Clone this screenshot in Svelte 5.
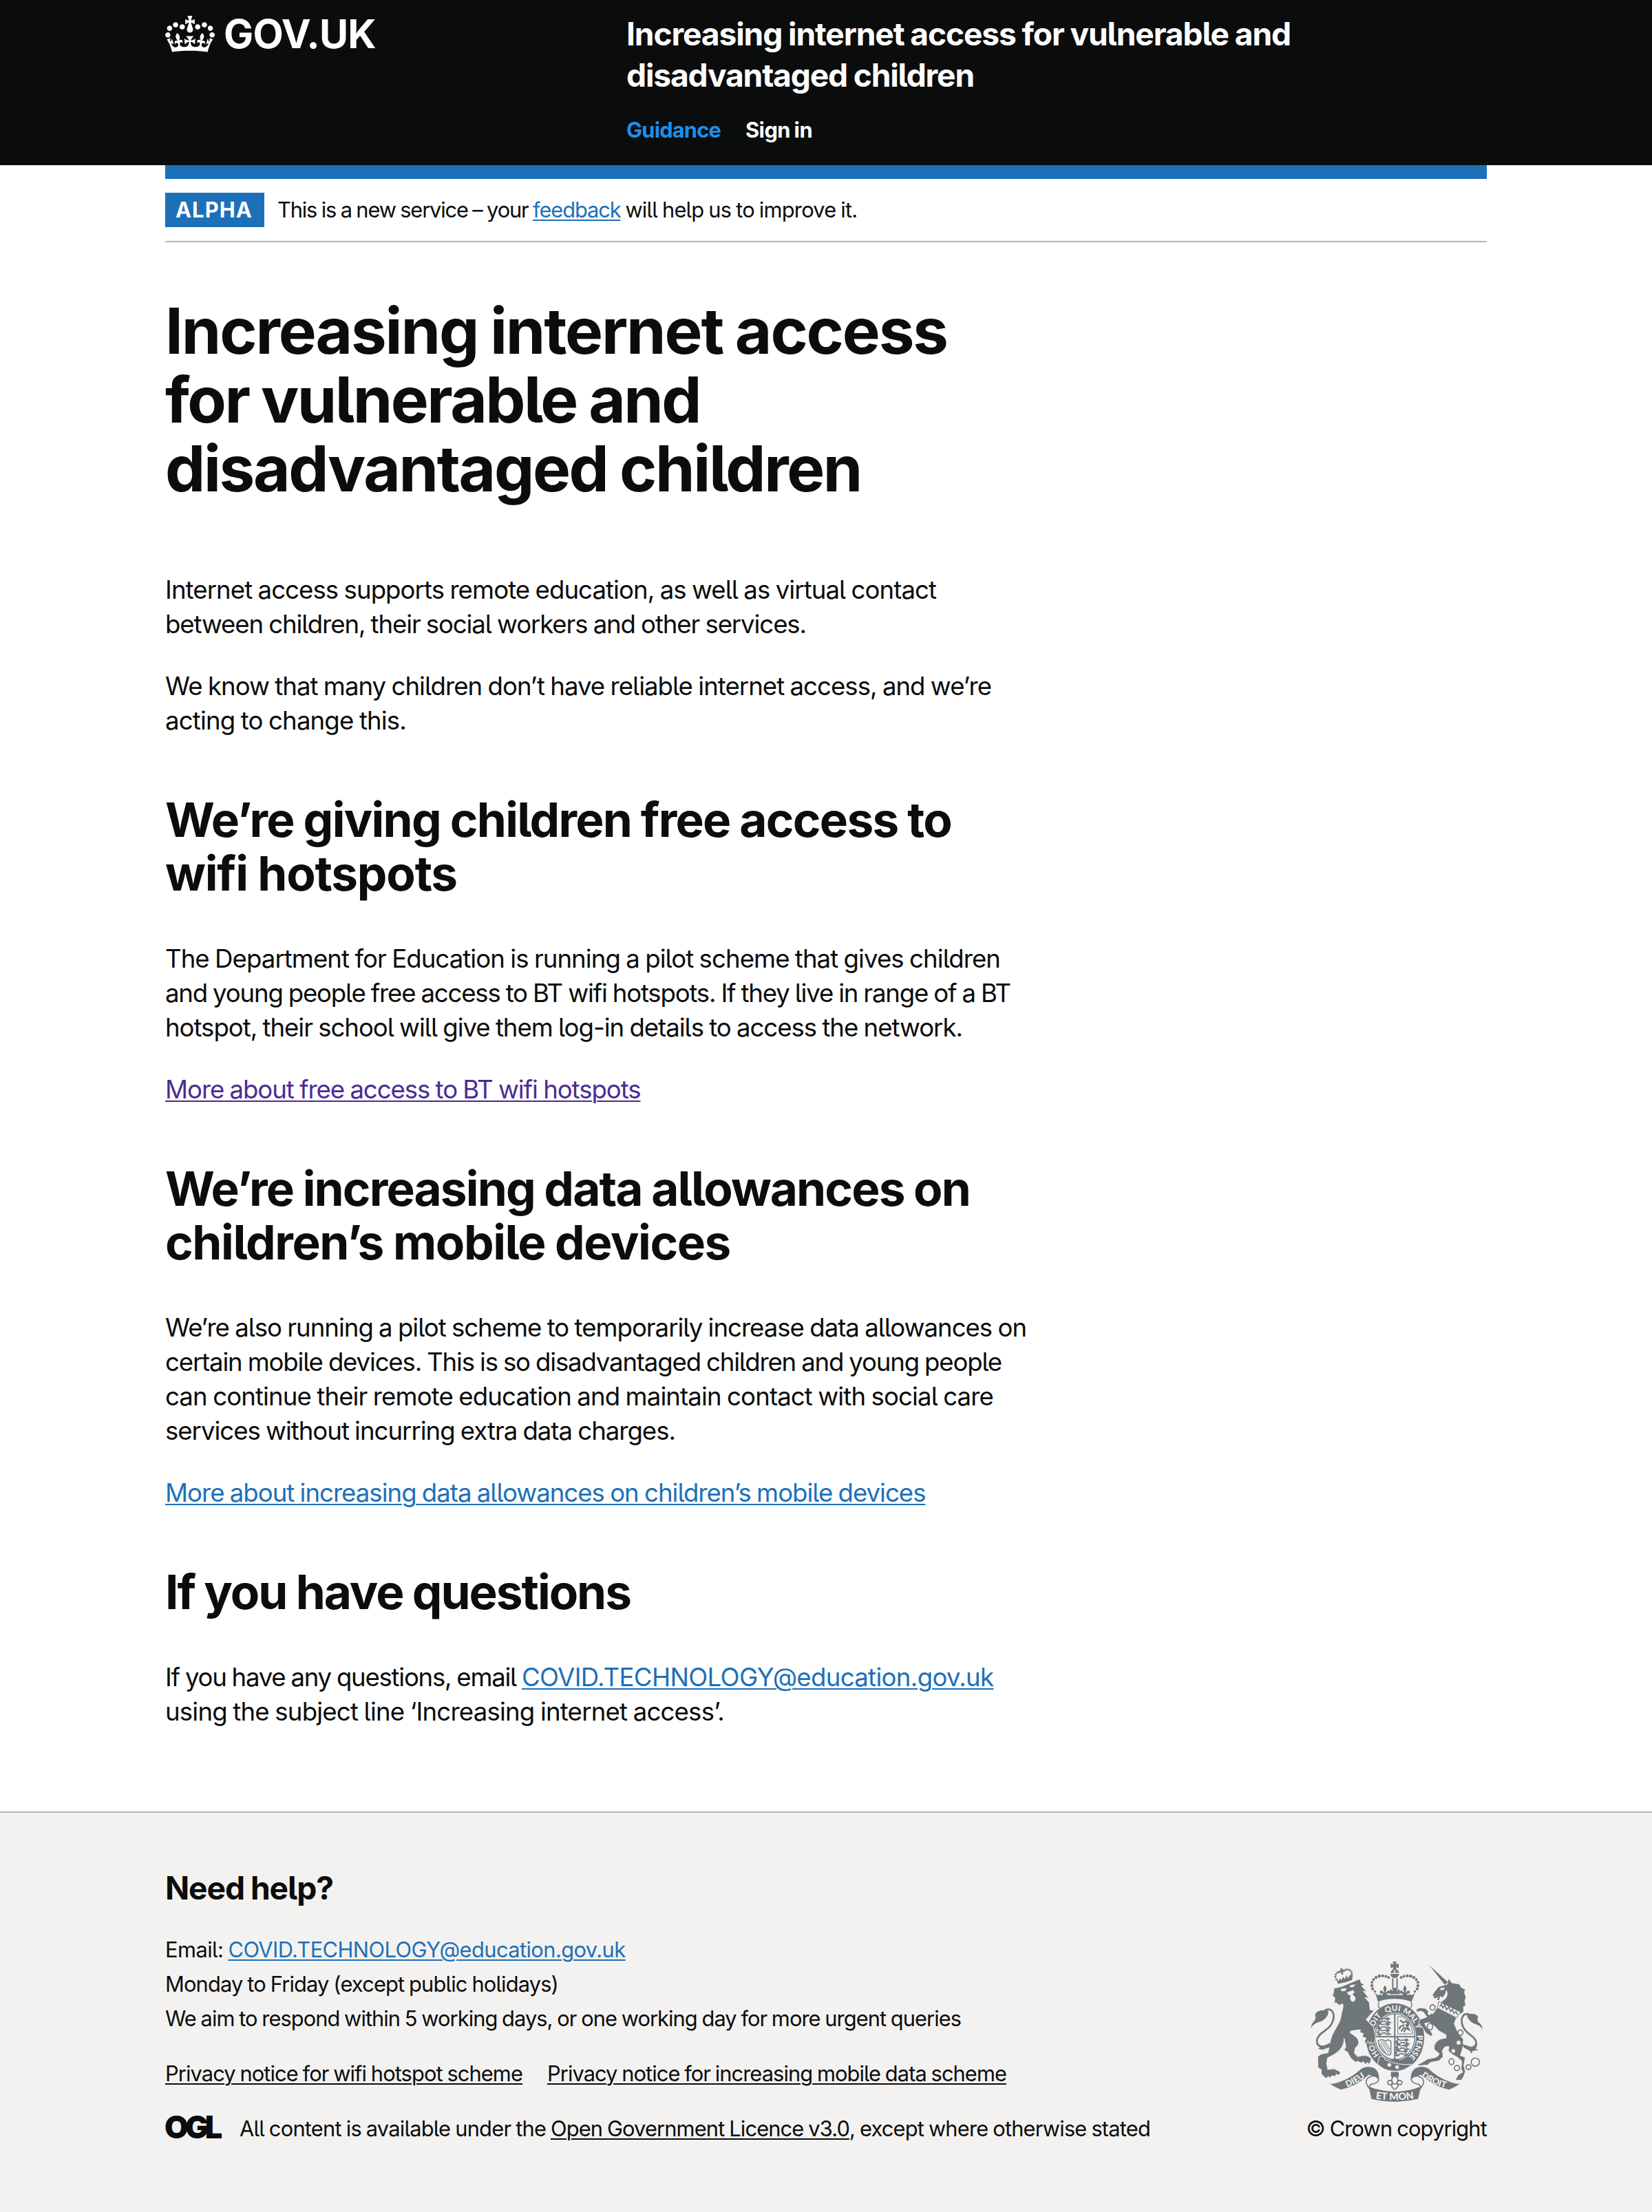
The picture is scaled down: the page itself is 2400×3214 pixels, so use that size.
<script>
  // Spreads the letters of a line evenly so that it occupies the given measure.
  function measure(node, width) {
    const natural = node.getBoundingClientRect().width;
    const count = node.textContent.length;
    node.style.letterSpacing = `${(width - natural) / count}px`;
  }

  const intro = [
    [
      ['Internet access supports remote education, as well as virtual contact', 1120],
      ['between children, their social workers and other services.', 931],
    ],
    [
      ['We know that many children don’t have reliable internet access, and we’re', 1200],
      ['acting to change this.', 350],
    ],
  ];

  const sections = [
    {
      heading: [['We’re giving children free access to', 1142], ['wifi hotspots', 424]],
      lines: [
        ['The Department for Education is running a pilot scheme that gives children', 1213],
        ['and young people free access to BT wifi hotspots. If they live in range of a BT', 1228],
        ['hotspot, their school will give them log-in details to access the network.', 1158],
      ],
      link: ['More about free access to BT wifi hotspots', 690.5],
      visited: true,
    },
    {
      heading: [['We’re increasing data allowances on', 1169], ['children’s mobile devices', 821]],
      lines: [
        ['We’re also running a pilot scheme to temporarily increase data allowances on', 1251],
        ['certain mobile devices. This is so disadvantaged children and young people', 1215],
        ['can continue their remote education and maintain contact with social care', 1203],
        ['services without incurring extra data charges.', 741],
      ],
      link: ['More about increasing data allowances on children’s mobile devices', 1104.5],
      visited: false,
    },
  ];

  // Beads of the royal crown arches, one side; the other is mirrored.
  const beads = [
    [398, 195, 6.5], [398, 180, 6], [405, 168, 6], [416, 159, 6.5], [430, 153, 7], [445, 152, 6.5],
    [459, 154, 6], [471, 159, 6], [401, 209, 6.5], [411, 220, 5],
  ];
  const lionBeads = [[238, 156], [240, 146], [247, 138], [255, 135], [276, 129], [284, 125], [293, 124], [302, 127], [308, 135], [310, 145], [242, 167], [309, 155]];
  const links = [[663, 290, 11, 12], [652, 374, 12, 14], [785, 400, 11, 12], [746, 527, 11, 13], [770, 555, 12, 11], [820, 551, 11, 10], [850, 529, 18, 18]];
</script>

<header class="header">
  <div class="width header-grid">
    <a class="logo" href="#home" aria-label="GOV.UK">
      <svg class="crown" viewBox="0 0 132 97" aria-hidden="true">
        <path fill="currentColor" fill-rule="evenodd" d="M25 30.2c3.5 1.5 7.7-.2 9.1-3.7 1.5-3.6-.2-7.8-3.9-9.2-3.6-1.4-7.6.3-9.1 3.9-1.4 3.5.3 7.5 3.9 9zM9 39.5c3.6 1.5 7.8-.2 9.2-3.7 1.5-3.6-.2-7.8-3.9-9.1-3.6-1.5-7.6.2-9.1 3.8-1.4 3.5.3 7.5 3.8 9zM4.4 57.2c3.5 1.5 7.7-.2 9.1-3.8 1.5-3.6-.2-7.7-3.9-9.1-3.5-1.5-7.6.3-9.1 3.8-1.4 3.5.3 7.6 3.9 9.1zm38.3-21.4c3.5 1.5 7.7-.2 9.1-3.8 1.5-3.6-.2-7.7-3.9-9.1-3.6-1.5-7.6.3-9.1 3.8-1.3 3.6.4 7.7 3.9 9.1zm64.4-5.6c-3.6 1.5-7.8-.2-9.1-3.7-1.5-3.6.2-7.8 3.8-9.2 3.6-1.4 7.7.3 9.2 3.9 1.3 3.5-.4 7.5-3.9 9zm15.9 9.3c-3.6 1.5-7.7-.2-9.1-3.7-1.5-3.6.2-7.8 3.7-9.1 3.6-1.5 7.7.2 9.2 3.8 1.5 3.5-.3 7.5-3.8 9zm4.7 17.7c-3.6 1.5-7.8-.2-9.2-3.8-1.5-3.6.2-7.7 3.9-9.1 3.6-1.5 7.7.3 9.2 3.8 1.3 3.5-.4 7.6-3.9 9.1zM89.3 35.8c-3.6 1.5-7.8-.2-9.2-3.8-1.4-3.6.2-7.7 3.9-9.1 3.6-1.5 7.7.3 9.2 3.8 1.4 3.6-.3 7.7-3.9 9.1zM69.7 17.7l8.9 4.7V9.3l-8.9 2.8c-.2-.3-.5-.6-.9-.9L72.4 0H59.6l3.5 11.2c-.3.3-.6.5-.9.9l-8.8-2.8v13.1l8.8-4.7c.3.3.6.7.9.9l-5 15.4v.1c-.2.8-.4 1.6-.4 2.4 0 4.1 3.1 7.5 7 8.1h.2c.3 0 .7.1 1 .1.4 0 .7 0 1-.1h.2c4-.6 7.1-4.1 7.1-8.1 0-.8-.1-1.7-.4-2.4V34l-5.1-15.4c.4-.2.7-.6 1-.9zM66 92.8c16.9 0 32.8 1.1 47.1 3.2 4-16.9 8.9-26.7 14-33.5l-9.6-3.4c1 4.9 1.1 7.2 0 10.2-1.5-1.4-3-4.3-4.2-8.7L108.6 76c2.8-2 5-3.2 7.5-3.3-4.4 9.4-10 11.9-13.6 11.2-4.3-.8-6.3-4.6-5.6-7.9 1-4.7 5.7-5.9 8-.5 4.3-8.7-3-11.4-7.6-8.8 7.1-7.2 7.9-13.5 2.1-21.1-8 6.1-8.1 12.3-4.5 20.8-4.7-5.4-12.1-2.5-9.5 6.2 3.4-5.2 7.9-2 7.2 3.1-.6 4.3-6.4 7.8-13.5 7.2-10.3-.9-10.9-8-11.2-13.8 2.5-.5 7.1 1.8 11 7.3L80.2 60c-4.1 4.4-8 5.3-12.3 5.4 1.4-4.4 8-11.6 8-11.6H55.5s6.4 7.2 7.9 11.6c-4.2-.1-8-1-12.3-5.4l1.4 16.4c3.9-5.5 8.5-7.7 10.9-7.3-.3 5.8-.9 12.8-11.1 13.8-7.2.6-12.9-2.9-13.5-7.2-.7-5 3.8-8.3 7.1-3.1 2.7-8.7-4.6-11.6-9.4-6.2 3.7-8.5 3.6-14.7-4.6-20.8-5.8 7.6-5 13.9 2.2 21.1-4.7-2.6-11.9.1-7.7 8.8 2.3-5.5 7.1-4.2 8.1.5.7 3.3-1.3 7.1-5.7 7.9-3.5.7-9-1.8-13.5-11.2 2.5.1 4.7 1.3 7.5 3.3l-4.7-15.4c-1.2 4.4-2.7 7.2-4.3 8.7-1.1-3-.9-5.3 0-10.2l-9.5 3.4c5 6.9 9.9 16.7 14 33.5 14.8-2.1 30.8-3.2 47.7-3.2z" />
      </svg>
      <span class="logotype"><span use:measure={221}>GOV.UK</span></span>
    </a>
    <div>
      <a class="service" href="#service">
        <span class="line" use:measure={965}>Increasing internet access for vulnerable and</span>
        <span class="line" use:measure={505}>disadvantaged children</span>
      </a>
      <nav class="nav">
        <a class="active" href="#guidance"><span use:measure={137}>Guidance</span></a>
        <a href="#signin"><span use:measure={97}>Sign in</span></a>
      </nav>
    </div>
  </div>
</header>

<div class="width">
  <div class="bar"></div>
  <div class="phase">
    <strong class="tag"><span use:measure={112}>ALPHA</span></strong>
    <p><span use:measure={371}>This is a new service – your&nbsp;</span><a class="link" href="#feedback"><span use:measure={127.5}>feedback</span></a><span use:measure={344}>&nbsp;will help us to improve it.</span></p>
  </div>

  <main>
    <h1>
      <span class="line" use:measure={1136}>Increasing internet access</span>
      <span class="line" use:measure={777}>for vulnerable and</span>
      <span class="line" use:measure={1011}>disadvantaged children</span>
    </h1>

    {#each intro as lines}
      <p>
        {#each lines as [text, width]}<span class="line" use:measure={width}>{text}</span>{/each}
      </p>
    {/each}

    {#each sections as section}
      <h2>
        {#each section.heading as [text, width]}<span class="line" use:measure={width}>{text}</span>{/each}
      </h2>
      <p>
        {#each section.lines as [text, width]}<span class="line" use:measure={width}>{text}</span>{/each}
      </p>
      <p>
        <a class="link" class:visited={section.visited} href="#more"><span use:measure={section.link[1]}>{section.link[0]}</span></a>
      </p>
    {/each}

    <h2><span class="line" use:measure={676}>If you have questions</span></h2>
    <p>
      <span use:measure={518}>If you have any questions, email&nbsp;</span><a class="link" href="#email"><span use:measure={685.5}>COVID.TECHNOLOGY@education.gov.uk</span></a>
      <span class="line" use:measure={812}>using the subject line ‘Increasing internet access’.</span>
    </p>
  </main>
</div>

<footer class="footer">
  <div class="width footer-grid">
    <div>
      <h3><span use:measure={244}>Need help?</span></h3>
      <ul class="contact">
        <li><span use:measure={91.5}>Email:&nbsp;</span><a class="link" href="#email"><span use:measure={577}>COVID.TECHNOLOGY@education.gov.uk</span></a></li>
        <li><span use:measure={571}>Monday to Friday (except public holidays)</span></li>
        <li><span use:measure={1156}>We aim to respond within 5 working days, or one working day for more urgent queries</span></li>
      </ul>
      <nav class="legal">
        <a class="link" href="#wifi"><span use:measure={519}>Privacy notice for wifi hotspot scheme</span></a>
        <a class="link" href="#data"><span use:measure={667}>Privacy notice for increasing mobile data scheme</span></a>
      </nav>
      <div class="licence">
        <span class="ogl" aria-hidden="true">OGL</span>
        <p><span use:measure={452}>All content is available under the&nbsp;</span><a class="link" href="#ogl"><span use:measure={434}>Open Government Licence v3.0</span></a><span use:measure={437}>, except where otherwise stated</span></p>
      </div>
    </div>

    <a class="copyright" href="#crown">
      <svg class="arms" viewBox="130 89 752 614" aria-hidden="true">
        <defs>
          <path id="garter" d="M499 531A97 113 0 0 1 499 305A97 113 0 0 1 499 531" />
          <path id="dieu" d="M270 645Q330 627 384 582" />
          <path id="etmon" d="M404 688Q498 702 592 688" />
          <path id="droit" d="M604 584Q656 627 730 645" />
          <g id="lys"><path d="M0-24C8-14 11-6 4 4L5 14C8 2 20-4 24 6C26 15 17 20 13 13C12 20 10 24 7 27H-7C-10 24-12 20-13 13C-17 20-26 15-24 6C-20-4-8 2-5 14L-4 4C-11-6-8-14 0-24Z" /></g>
          <g id="lions"><path d="M-34-7l8-5 7 4 18-2 10-4 6 5-8 3 2 8 9 5-15 1-5-7-15 1-6 8-12-1 7-5-3-6-8 2zM-24-13q-14-4-6-12" /><path d="M0-8l9 2M-30 11l8-3" /></g>
        </defs>
        <g class="ink">
          <!-- crest crown -->
          <path d="M488 90h19l-5 12 13-4v20l-13-4 5 12h-19l5-12-13 4V98l13 4z" />
          <path d="M479 139a19 17 0 0 1 16-15v15zM500 124a19 17 0 0 1 17 15h-17zM478 143h39q-2 16-19 19-18-3-20-19z" />
          <path d="M486 163h6v40h-6zM505 163h6v40h-6z" />
          <path d="M484 204h29l-8 14 15-8v22h-44v-22l15 8z" />
          {#each beads as [x, y, r]}
            <circle cx={x} cy={y} {r} />
            <circle cx={997 - x} cy={y} {r} />
          {/each}
          <use href="#lys" transform="translate(455 215) scale(.9)" />
          <use href="#lys" transform="translate(542 215) scale(.9)" />
          <path d="M407 216q12 28 27 16l4 4h119l6-4q15 12 27-16-11 28-18 49-74-25-148 0-5-23-17-49z" />
          <path class="line-4" d="M430 266q-10 16 2 27M568 266q10 16-2 27" />

          <!-- garter and shield -->
          <ellipse cx="499" cy="420" rx="128" ry="148" />
          <ellipse class="cut" cx="499" cy="418" rx="92" ry="105" />
          <ellipse class="line-4" cx="499" cy="418" rx="87" ry="100" />
          <path class="line-6" d="M498 318v200M412 418h174" />
          <g class="line-5">
            <use href="#lions" x="459" y="349" /><use href="#lions" x="459" y="373" /><use href="#lions" x="459" y="400" />
            <use href="#lions" x="541" y="442" /><use href="#lions" x="541" y="466" /><use href="#lions" x="537" y="491" />
          </g>
          <path class="line-3" d="M511 330h18q42 18 47 76h-65z" />
          <path class="line-7" d="M521 345l14 12 12-7 9 10-8 7 12 20-14-6-8 17M540 366l-18 8-5 12M540 375l-14 20M552 375q12-16 2-24" />
          <path class="line-4" d="M425 436q18-10 32 2 11-12 24 0v56q-7 8-17 2-34-22-39-60z" />
          <path class="line-3" d="M437 438l36 56M447 438l30 48M458 441l20 34M433 448l28 47M430 459l20 28" />
          <path d="M478 521q20-14 43 0l-4 9h-36z" />
        </g>
        <g class="motto ring">
          <text><textPath href="#garter" startOffset="16%">HO</textPath></text>
          <text><textPath href="#garter" startOffset="34.5%">SOIT</textPath></text>
          <text><textPath href="#garter" startOffset="48.5%">QUI</textPath></text>
          <text><textPath href="#garter" startOffset="60.5%">MAL</textPath></text>
          <text><textPath href="#garter" startOffset="68.5%">Y</textPath></text>
          <text><textPath href="#garter" startOffset="82%">PENSE</textPath></text>
        </g>
        <g class="ink">
          <path class="halo" d="M428 508q14-10 24 2l3 8q60 28 116 20-30 36-86 30-34-4-52-22-14-6-8-18 6-10 3-20z" />
          <circle class="cut" cx="474" cy="541" r="8" />
          <circle class="cut" cx="508" cy="551" r="8" />

          <!-- lion -->
          <path class="halo" d="M232 206l35-8 78-33 6 18 15 6-13 7 24 26-17-4 25 32-18-4 20 23 3 31 18 4-14 14-21 25 32 33 9 40-3 26-12 8-6-12-5 13-7-14-9 14-7-14 8-12-18-7 6-13-16-6 3-12-42 6-4 7 20 14c24 18 24 38 4 52l-5 23 15 16 17-4c20-3 38 2 42 17l-7 20-12-7-5 9-12-14-5 8-18-8-11 3-20-18-14-26-15-8 8-16-8-36c2 40-28 66-72 85l-4 26 5 25 28-3 28 14-6 15-14-5-2 10-16-3-10 10-6-8-8 10-9-7-14-14 1-18-15-8-1-48 14-12 31-6 10-50c10-48 38-66 46-106 4-32 15-46 7-58l-14 7-15-13-8 10 4-29-11-12 6-16z" />
          <path class="cut" d="M262 209l26-3-6 12-17 1zM302 193l24-4-10 12-14 1zM289 224l28-10 5 12-10 6q16 12 14 22-4 12-14 11-10-3-9-20l2-8-10-2z" />
          <path d="M132 382C134 346 158 352 150 326C148 306 180 298 206 304C212 322 194 346 166 354C150 360 138 366 132 382z" />
          <path class="line-8" d="M192 302C226 288 242 322 222 362C204 394 168 396 158 430C152 462 184 470 214 448" />
          <path d="M150 447l16 12 44-6 18-12-6 20-40 14-20-4 8-6z" />
          <g>
            {#each lionBeads as [x, y]}<circle cx={x} cy={y} r="4.5" />{/each}
            <path d="M243 165l10 10 6-14 7 11 5-16 9 10 7-16 7 12 8-14 12 2-3 20q-30 12-62 17zM259 123l4-5 6 0 1 8 8-2 1 10-8-1 2 11-8 3-2-11-8 3-2-9 8-1z" />
          </g>

          <!-- unicorn -->
          <path d="M648 105l82 74-13 12z" />
          <path d="M662 238L672 222L690 200L712 194L728 190L733 164L747 184L779 188L790 205L805 212L801 224L808 246L803 262L807 281L797 286L798 308L786 318L700 268L722 250Q735 230 722 212Q722 235 705 246L696 240L692 258L682 256L690 244L676 250L664 246L672 240Z" />
          <path class="cut" d="M697 205l21-2-8 11-12 1z" />
          <path class="halo" d="M684 290L664 318L650 312L632 294L606 291L590 300L596 310L612 306L624 312L638 332L608 342L602 356L622 382L634 402L656 416L664 410L656 394L642 384L628 360L648 356L672 372L690 392L722 410V424C690 424 664 446 671 475L692 492Q690 505 670 510L640 516L622 528L598 540L602 545L640 542L655 530L690 524L710 505L706 480Q715 455 735 462L732 480L750 496L775 510L790 525L788 560L795 572L775 585L762 608H790L800 590L807 570L800 545L806 508L785 500L796 465L798 430L770 390L758 360L768 335Z" />
          <path class="collar" d="M690 264l96 46-18 25-84-43z" />
          <path class="line-5" d="M694 286l8-10 6 16 8-12 8 20 10-12 8 20 8-10 6 18 10-8 6 14" />
          <circle class="cut" cx="777" cy="444" r="9" />
          <circle class="cut" cx="754" cy="480" r="8" />
          <circle class="cut" cx="649" cy="316" r="7" />
          {#each links as [x, y, rx, ry]}<ellipse class="link-ring" cx={x} cy={y} {rx} {ry} />{/each}
          <path d="M882 390C880 350 852 362 862 332C858 318 832 314 814 322C814 340 832 356 852 364C866 368 876 374 882 390z" />
          <path class="line-8" d="M826 322C796 310 782 338 796 374C812 410 854 416 854 446C852 466 824 474 798 456" />
          <path d="M794 450l48 16 18-16-8 22 14 4-28 4-4 12-8-12-26-14z" />

          <!-- motto ribbon -->
          {#each ['', 'translate(997) scale(-1 1)'] as flip}
            <g transform={flip}>
              <path class="halo" d="M208 621Q232 626 262 612Q310 596 352 556Q382 540 412 556Q434 575 430 608Q420 588 398 590L384 586Q330 636 262 651Q234 640 208 621Z" />
              <path class="ribbon-fold" d="M398 590Q368 600 373 620Q378 634 390 648Q380 626 404 624Q424 620 428 604Q418 588 398 590Z" />
            </g>
          {/each}
          <path d="M384 636q114 44 228 0l-12 54q-102 24-204 0z" />
          <path d="M481 572h34v22h-34z" />
          <path class="line-5" d="M498 586q22 18 8 34q6-14 18-10q10 6 2 16q-8 4-14-2v10q-8 14-14 14t-14-14v-10q-6 6-14 2q-8-10 2-16q12-4 18 10q-14-16 8-34z" />
          <path class="line-5" d="M482 624h32" />
        </g>
        <g class="motto">
          <text><textPath href="#dieu" startOffset="50%">DIEU</textPath></text>
          <text class="wide"><textPath href="#etmon" startOffset="50%">ET MON</textPath></text>
          <text><textPath href="#droit" startOffset="50%">DROIT</textPath></text>
        </g>
      </svg>
      <span use:measure={262.5}>© Crown copyright</span>
    </a>
  </div>
</footer>

<style>
  :global(body) {
    margin: 0;
    background: #fff;
    color: #0b0c0c;
    font-family: Inter, "Liberation Sans", sans-serif;
    font-feature-settings: "cv05", "calt" 0;
    word-spacing: -1px;
    -webkit-font-smoothing: antialiased;
  }

  h1, h2, h3, p, ul { margin: 0; padding: 0; }
  h1 span, h2 span, h3 span, p span, li span, nav span, .service span, .logotype span, .tag span, .copyright span {
    display: inline-block;
    white-space: nowrap;
  }
  .line { width: max-content; }
  h1 .line, h2 .line, p .line, .service .line { display: block; }

  .width { width: 1920px; margin: 0 auto; }

  .header { height: 240px; background: #0b0c0c; color: #fff; }
  .header a { color: #fff; text-decoration: none; }
  .header-grid { display: grid; grid-template-columns: 670px 1fr; }
  .logo { display: flex; align-items: flex-start; gap: 13px; padding-top: 23px; }
  .crown { width: 72px; height: 53px; }
  .logotype { font-size: 57.5px; line-height: 54px; font-weight: 700; margin-top: -1px; }
  .service { display: block; padding-top: 19px; font-size: 46.2px; line-height: 60px; font-weight: 700; }
  .nav { display: flex; gap: 36px; padding-top: 30px; font-size: 30.8px; line-height: 40px; font-weight: 700; }
  .header .nav .active { color: #1d8feb; }

  .bar { height: 20px; background: #1d70b8; }
  .phase {
    display: flex;
    gap: 19px;
    padding: 20px 0;
    border-bottom: 2px solid #b1b4b6;
    font-size: 30.8px;
    line-height: 50px;
  }
  .tag { box-sizing: border-box; width: 144px; height: 50px; padding-left: 15px; background: #1d70b8; color: #fff; font-weight: 700; }

  .link { color: #1d70b8; text-decoration: none; }
  .link span { text-decoration: underline; text-decoration-thickness: 2px; text-underline-offset: 3px; }
  .link.visited { color: #4c2c92; }

  main { padding: 78px 0 120px; }
  h1 { margin-bottom: 102px; font-size: 92.4px; line-height: 100px; font-weight: 700; word-spacing: -2px; }
  main p { margin-bottom: 40px; font-size: 36.6px; line-height: 50px; }
  main p:last-child { margin-bottom: 0; }
  h2 { margin: 80px 0 60px; font-size: 69.3px; line-height: 78px; font-weight: 700; }

  .footer { box-sizing: border-box; height: 582px; padding-top: 79px; border-top: 2px solid #b1b4b6; background: #f3f2f1; font-size: 30.8px; }
  .footer-grid { display: flex; justify-content: space-between; align-items: flex-end; }
  h3 { font-size: 46.2px; line-height: 60px; font-weight: 700; }
  .contact { margin-top: 35px; list-style: none; line-height: 50px; }
  .legal { display: flex; gap: 36px; margin-top: 35px; line-height: 40px; }
  .legal .link, .licence .link { color: #0b0c0c; }
  .licence { display: flex; align-items: center; margin-top: 40px; line-height: 40px; }
  .ogl { width: 108px; font-size: 45px; font-weight: 900; letter-spacing: -5px; margin: -4px 0 0 -1px; padding-right: 1px; }
  .copyright { display: flex; flex-direction: column; align-items: center; color: #0b0c0c; text-decoration: none; line-height: 40px; }

  .arms { width: 250px; height: 204px; margin-bottom: 19px; overflow: visible; }
  .ink { fill: #6f777b; }
  .cut { fill: #f3f2f1; }
  .halo { stroke: #f3f2f1; stroke-width: 3; }
  .collar { fill: #f3f2f1; stroke: #6f777b; stroke-width: 3; }
  .link-ring, .ribbon-fold { fill: #f3f2f1; stroke: #6f777b; stroke-width: 5; }
  .line-3, .line-4, .line-5, .line-6, .line-7, .line-8 { fill: none; stroke: #6f777b; stroke-width: 3; }
  .line-4 { stroke-width: 4; }
  .line-5 { stroke-width: 5; }
  .line-6 { stroke-width: 6; }
  .line-7 { stroke-width: 7; }
  .line-8 { stroke-width: 8; }
  .motto { fill: #f3f2f1; font-family: Lato, sans-serif; font-weight: 900; font-size: 38px; text-anchor: middle; word-spacing: 0; }
  .motto .wide { font-size: 43px; }
  .ring { font-size: 34px; }
</style>
